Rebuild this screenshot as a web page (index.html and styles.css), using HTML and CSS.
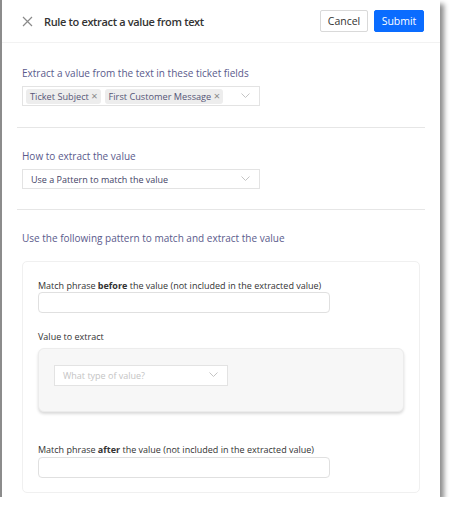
FILE: index.html
```html
<!DOCTYPE html>
<html lang="en">
<head>
    <meta charset="UTF-8">
    <title>Rule to extract a value from text</title>
    <link rel="stylesheet" href="styles.css">
</head>
<body>

    <div class="window">
        <div class="rule-header">
            <span class="close-icon">
                <svg width="11" height="11" viewBox="0 0 11 11"><path d="M1 1L10 10M10 1L1 10" stroke="#8a8a8a" stroke-width="1.2" fill="none"/></svg>
            </span>
            <div class="rule-title">Rule to extract a value from text</div>
            <button class="btn btn-cancel">Cancel</button>
            <button class="btn btn-submit">Submit</button>
        </div>

        <!-- Source fields -->
        <div class="section">
            <div class="section-label">Extract a value from the text in these ticket fields</div>
            <div class="select-box">
                <span class="tag">Ticket Subject <span class="tag-x">&times;</span></span>
                <span class="tag">First Customer Message <span class="tag-x">&times;</span></span>
                <span class="chevron"><svg width="9" height="6" viewBox="0 0 9 6"><path d="M0.5 0.5L4.5 4.5L8.5 0.5" stroke="#c4c4c4" fill="none"/></svg></span>
            </div>
        </div>

        <!-- Method -->
        <div class="section">
            <div class="section-label">How to extract the value</div>
            <div class="select-box">
                <span class="select-text">Use a Pattern to match the value</span>
                <span class="chevron"><svg width="9" height="6" viewBox="0 0 9 6"><path d="M0.5 0.5L4.5 4.5L8.5 0.5" stroke="#c4c4c4" fill="none"/></svg></span>
            </div>
        </div>

        <!-- Pattern -->
        <div class="section last">
            <div class="section-label">Use the following pattern to match and extract the value</div>
            <div class="pattern-card">
                <div class="field-label">Match phrase <b>before</b> the value (not included in the extracted value)</div>
                <div class="text-input"></div>

                <div class="field-label value-label">Value to extract</div>
                <div class="value-box">
                    <div class="select-box type-select">
                        <span class="placeholder">What type of value?</span>
                        <span class="chevron"><svg width="9" height="6" viewBox="0 0 9 6"><path d="M0.5 0.5L4.5 4.5L8.5 0.5" stroke="#c4c4c4" fill="none"/></svg></span>
                    </div>
                </div>

                <div class="field-label after-label">Match phrase <b>after</b> the value (not included in the extracted value)</div>
                <div class="text-input"></div>
            </div>
        </div>
    </div>

</body>
</html>
```

FILE: styles.css
```css
body {
    margin: 0;
    padding: 0;
    background: #ffffff;
    font-family: 'Open Sans', sans-serif;
}

.window {
    width: 440px;
    height: 497px;
    border-left: 2px solid #8c8c8c;
    background: #ffffff;
    box-shadow: 4px 4px 5px rgba(0, 0, 0, 0.45);
    overflow: hidden;
    box-sizing: border-box;
}

.rule-header {
    height: 43px;
    display: flex;
    align-items: center;
    border-bottom: 1px solid #f2f2f2;
    padding: 0 16px 0 20px;
    box-sizing: border-box;
}

.close-icon {
    display: flex;
    width: 11px;
    height: 11px;
}

.rule-title {
    flex: 1;
    margin-left: 11px;
    font-size: 11px;
    letter-spacing: -0.35px;
    font-weight: 600;
    color: #333333;
}

.btn {
    font-family: 'Open Sans', sans-serif;
    font-size: 10.5px;
    height: 22px;
    border-radius: 2px;
    padding: 0;
    cursor: pointer;
}

.btn-cancel {
    background: #ffffff;
    border: 1px solid #d9d9d9;
    color: #333333;
    width: 48px;
    margin-right: 6px;
}

.btn-submit {
    background: #0a6cff;
    border: 1px solid #0a6cff;
    color: #ffffff;
    width: 50px;
}

.section {
    margin: 0 15px;
    padding: 23px 5px 21px 5px;
    border-bottom: 1px solid #e6e6e6;
}

.section + .section {
    padding-top: 21px;
    padding-bottom: 20px;
}

.section.last {
    border-bottom: none;
}

.section-label {
    font-size: 10px;
    line-height: 14px;
    color: #5a5a8c;
    margin-bottom: 6px;
}

.select-box {
    width: 238px;
    height: 20px;
    border: 1px solid #e3e3e3;
    box-sizing: border-box;
    display: flex;
    align-items: center;
    padding: 0 3px;
    position: relative;
    font-size: 9px;
}

.tag {
    background: #ededed;
    border-radius: 3px;
    color: #555577;
    padding: 1px 3px 1px 4px;
    margin-right: 4px;
    white-space: nowrap;
    font-size: 9.2px;
}

.tag-x {
    color: #888888;
    font-size: 11px;
    line-height: 10px;
}

.select-text {
    color: #444466;
    padding-left: 5px;
}

.chevron {
    position: absolute;
    right: 9px;
    top: 6px;
    display: flex;
}

.pattern-card {
    margin-top: 16px;
    border: 1px solid #f0f0f0;
    border-radius: 5px;
    padding: 17px 15px 14px 15px;
}

.field-label {
    font-size: 9px;
    line-height: 13px;
    color: #333333;
}

.text-input {
    width: 292px;
    height: 21px;
    border: 1px solid #e0e0e0;
    border-radius: 4px;
    box-sizing: border-box;
}

.value-label {
    margin-top: 17px;
    margin-bottom: 5px;
}

.value-box {
    width: 366px;
    height: 64px;
    background: #f7f7f7;
    border-radius: 6px;
    box-shadow: 0 2px 3px rgba(0, 0, 0, 0.15);
    border: 1px solid #ececec;
    box-sizing: border-box;
    padding: 16px 15px;
}

.type-select {
    width: 174px;
    height: 21px;
    background: #ffffff;
}

.placeholder {
    color: #c4c4c4;
    padding-left: 5px;
}

.after-label {
    margin-top: 31px;
    margin-bottom: 1px;
}
```
